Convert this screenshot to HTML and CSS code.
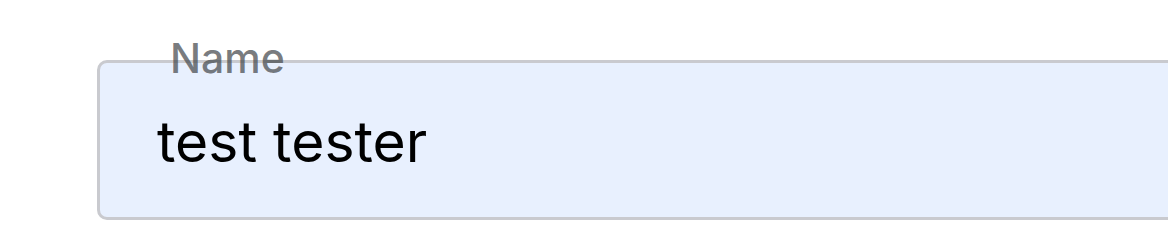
FILE: index.html
```html
<!DOCTYPE html>
<html lang="en">
<head>
  <meta charset="UTF-8">
  <title>Name</title>
  <link rel="stylesheet" href="styles.css">
</head>
<body>

  <div class="form">
    <div class="field">
      <label for="name" class="field-label">Name</label>
      <input type="text" id="name" class="field-input" value="test tester" />
    </div>
  </div>

</body>
</html>
```

FILE: styles.css
```css
html, body {
  margin: 0;
  background: #ffffff;
  overflow: hidden;
}
body {
  font-family: Inter, "Noto Sans", sans-serif;
}
.form {
  padding: 60px 0 0 97px;
}
.field {
  position: relative;
  width: 1200px;
}
.field-label {
  position: absolute;
  left: 73px;
  top: -27px;
  font-size: 41px;
  font-weight: 500;
  color: rgba(70, 74, 78, 0.72);
  pointer-events: none;
}
.field-input {
  box-sizing: border-box;
  width: 100%;
  height: 160px;
  padding: 2px 0 0 57px;
  border: 3px solid #c9cacf;
  border-radius: 10px;
  background: #e8f0fe;
  font-family: Inter, "Noto Sans", sans-serif;
  font-size: 57px;
  color: #000000;
  outline: none;
}
```
